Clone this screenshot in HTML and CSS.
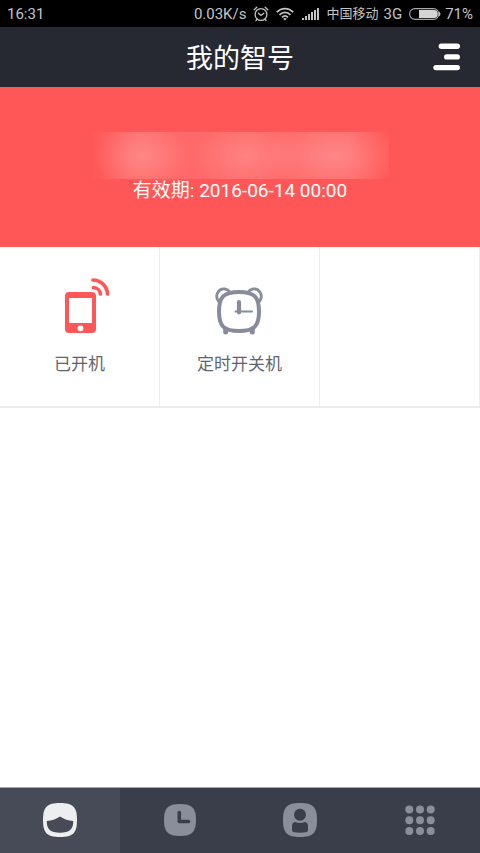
FILE: index.html
```html
<!DOCTYPE html>
<html lang="zh-CN">
<head>
<meta charset="utf-8">
<meta name="viewport" content="width=device-width, initial-scale=1">
<title>我的智号</title>
<link rel="stylesheet" href="styles.css">
</head>
<body>
<div class="status">
  <span class="time">16:31</span>
  <span>0.03K/s</span>
  <svg class="alarm" width="16" height="16" viewBox="0 0 16 16" fill="none" stroke="#c4c4c4" stroke-width="1.3" stroke-linecap="round" aria-hidden="true"><circle cx="8" cy="8.5" r="5.9"/><path d="M1.2 3.8 3.8 1.3M14.8 3.8 12.2 1.3M5.4 7.2 8 9.5l2.8-2.3M4 13.2l-1 1.4M12 13.2l1 1.4"/></svg>
  <svg class="wifi" width="18" height="14" viewBox="0 0 18 14" fill="none" stroke="#c4c4c4" stroke-width="1.7" aria-hidden="true"><path d="M.8 5.2C5.5.3 12.5.3 17.2 5.2M3.5 7.9c3.2-3.3 7.8-3.3 11 0M6 10.4c1.8-1.8 4.2-1.8 6 0"/><path d="M7.2 11.7q1.8-1.4 3.6 0L9 13.6z" fill="#c4c4c4" stroke="none"/></svg>
  <svg class="signal" width="18" height="12" viewBox="0 0 18 12" fill="#c4c4c4" aria-hidden="true"><path d="M1 10h2v2H1zM4 8h2v4H4zM7 6h2v6H7zM10 4h2v8h-2zM13 2h2v10h-2zM16 0h2v12h-2z"/></svg>
  <span class="carrier">中国移动</span>
  <span class="network">3G</span>
  <svg class="battery" width="32" height="12" viewBox="0 0 32 12" aria-hidden="true"><rect x=".6" y=".6" width="29.2" height="10.8" rx="5.4" fill="none" stroke="#a8a8a8" stroke-width="1.1"/><path d="M10 2h14.8a4 4 0 0 1 0 8H10z" fill="#d4d4d4"/><path d="M30 3.5q3 2.5 0 5" fill="#c4c4c4"/></svg>
  <span>71%</span>
</div>
<header class="header">
  <h1>我的智号</h1>
  <button class="menu" type="button" aria-label="菜单">
    <svg width="28" height="28" viewBox="0 0 28 28" stroke="#fff" stroke-width="5.4" stroke-linecap="round"><path d="M8.300 3.200H24.300M13.700 13.900h10.600M3 24.600h21.300"/></svg>
  </button>
</header>
<main>
  <section class="banner">
    <div class="masked"></div>
    <p>有效期: 2016-06-14 00:00</p>
  </section>
  <section class="grid">
    <button class="cell" type="button">
      <svg width="60" height="60" viewBox="0 0 60 60" aria-hidden="true"><path d="M19 14h23q4 0 4 4v33q0 4-4 4H19q-4 0-4-4V18q0-4 4-4zM19 20v25h23V20z" fill="#ff5757" fill-rule="evenodd"/><circle cx="30.500" cy="50.300" r="2.900" fill="#fff"/><path d="M43.500 9.500a7.500 7.500 0 0 1 7 6.500M43 2a14.500 14.500 0 0 1 14.500 14" fill="none" stroke="#ff5757" stroke-width="3.700" stroke-linecap="round"/></svg>
      <span>已开机</span>
    </button>
    <button class="cell" type="button">
      <svg width="60" height="60" viewBox="0 0 60 60" fill="none" stroke="#888c9a" stroke-linecap="round" aria-hidden="true"><path d="M8.500 23.500C4 17 9 10 15 11q3 .5 5 3M49.500 23.500C54 17 49 10 43 11q-3 .5-5 3" stroke-width="2.800"/><path d="M29 14C44 14 49 18.500 49 33.500S44 53 29 53 9 48.500 9 33.500 14 14 29 14z" stroke-width="4"/><path d="M15.700 51v3M42.300 51v3" stroke-width="5"/><path d="M29 24v10.500" stroke-width="4.200"/><path d="M25.500 33.500H42" stroke-width="2"/></svg>
      <span>定时开关机</span>
    </button>
    <div class="cell"></div>
  </section>
</main>
<nav class="tabs" aria-label="主导航">
  <a class="active" href="#home" aria-label="我的"><svg width="34" height="34" viewBox="0 0 34 34"><path d="M17 0C30 0 34 4 34 17S30 34 17 34 0 30 0 17 4 0 17 0z" fill="#edeef0"/><path d="M3.800 18Q11 17.500 17 13.500q6 4 13.200 4.500C30.500 26 26.500 29.800 17 29.800S3.500 26 3.800 18z" fill="#474b58"/></svg></a>
  <a href="#history" aria-label="记录"><svg width="34" height="34" viewBox="0 0 34 34"><path d="M17 1C29 1 33 5 33 17s-4 16-16 16S1 29 1 17 5 1 17 1z" fill="#8a8e9b"/><path d="M16.300 9.500v9h9.200" fill="none" stroke="#3a3d4a" stroke-width="3.600" stroke-linecap="round" stroke-linejoin="round"/></svg></a>
  <a href="#contacts" aria-label="联系人"><svg width="34" height="34" viewBox="0 0 34 34"><path d="M17 0C30 0 34 4 34 17S30 34 17 34 0 30 0 17 4 0 17 0z" fill="#8a8e9b"/><g fill="#3a3d4a"><circle cx="17" cy="11.800" r="6"/><path d="M12 19q5 2 10 0 3 .5 3 4v4q0 2-2 2.300-6 .9-12 0-2-.3-2-2.300v-4q0-3.500 3-4z"/></g></svg></a>
  <a href="#more" aria-label="更多"><svg width="34" height="34" viewBox="0 0 34 34" fill="#8a8e9b"><circle cx="6.300" cy="6.500" r="4"/><circle cx="17" cy="6.500" r="4"/><circle cx="27.700" cy="6.500" r="4"/><circle cx="6.300" cy="17.200" r="4"/><circle cx="17" cy="17.200" r="4"/><circle cx="27.700" cy="17.200" r="4"/><circle cx="6.300" cy="28" r="4"/><circle cx="17" cy="28" r="4"/><circle cx="27.700" cy="28" r="4"/></svg></a>
</nav>
</body>
</html>
```
FILE: styles.css
```css
* {
  box-sizing: border-box;
}

body {
  margin: 0;
  min-height: 100vh;
  display: flex;
  flex-direction: column;
  background: #fff;
  font-family: Roboto, "Noto Sans CJK SC", sans-serif;
}

button {
  margin: 0;
  padding: 0;
  border: 0;
  background: none;
  font: inherit;
}

svg {
  display: block;
  flex: none;
}

.status {
  display: flex;
  align-items: center;
  height: 27px;
  padding: 1px 7px 0;
  background: #000;
  color: #c4c4c4;
  font-size: 15px;
  line-height: 26px;
  white-space: nowrap;
}

.time {
  margin-right: auto;
}

.alarm {
  margin-left: 7px;
}

.wifi {
  margin-left: 7px;
}

.signal {
  margin-left: 7px;
}

.carrier {
  margin-left: 7px;
  font-size: 13px;
}

.network {
  margin-left: 5px;
}

.battery {
  margin: 0 4px 0 7px;
}

.header {
  display: grid;
  grid-template-columns: 1fr auto 1fr;
  align-items: center;
  height: 60px;
  padding: 0 19px;
  background: #262832;
  color: #fff;
}

h1 {
  grid-column: 2;
  margin: 0;
  padding-top: 4px;
  font-size: 27px;
  font-weight: 400;
  line-height: 56px;
}

.menu {
  justify-self: end;
}

.banner {
  display: flex;
  flex-direction: column;
  align-items: center;
  height: 160px;
  padding-top: 45px;
  background: #ff5757;
  color: #fff;
}

.masked {
  width: 62%;
  height: 47px;
  background:
    radial-gradient(ellipse 16% 80% at 17% 50%, rgba(255, 255, 255, 0.2), transparent),
    radial-gradient(ellipse 18% 80% at 52% 50%, rgba(255, 255, 255, 0.17), transparent),
    radial-gradient(ellipse 24% 80% at 82% 50%, rgba(255, 255, 255, 0.2), transparent),
    linear-gradient(90deg, transparent, rgba(255, 255, 255, 0.11) 14%, rgba(255, 255, 255, 0.11) 86%, transparent);
}

.banner p {
  margin: 0;
  font-size: 19px;
  line-height: 24px;
}

.grid {
  display: grid;
  grid-template-columns: repeat(3, 1fr);
  border-bottom: 2px solid #ececec;
}

.cell {
  display: flex;
  flex-direction: column;
  align-items: center;
  height: 159px;
  padding-top: 31px;
  border-right: 1px solid #ececec;
  color: #62656f;
  font-size: 17px;
  line-height: 24px;
}

.cell span {
  margin-top: 14px;
}

.tabs {
  display: grid;
  grid-template-columns: repeat(4, 1fr);
  height: 66px;
  margin-top: auto;
  border-top: 1px solid #a5a6ab;
  background: #3a3d4a;
}

.tabs a {
  display: flex;
  align-items: center;
  justify-content: center;
  padding-bottom: 2px;
}

.tabs .active {
  background: #474b58;
}
```
